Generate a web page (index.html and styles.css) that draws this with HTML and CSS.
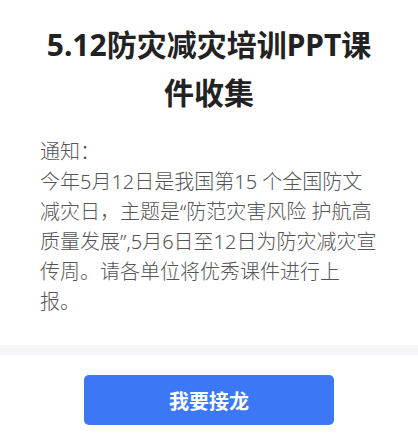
FILE: index.html
```html
<!DOCTYPE html>
<html lang="zh">
<head>
<meta charset="utf-8">
<link rel="stylesheet" href="styles.css">
</head>
<body>
<main class="page">
  <section class="content">
    <h1 class="title">5.12防灾减灾培训PPT课件收集</h1>
    <div class="notice">
      <p>通知：</p>
      <p>今年5月12日是我国第15 个全国防文减灾日，主题是“防范灾害风险 护航高质量发展”,5月6日至12日为防灾减灾宣传周。请各单位将优秀课件进行上报。</p>
    </div>
  </section>
  <div class="divider"></div>
  <footer class="actions">
    <button class="btn">我要接龙</button>
  </footer>
</main>
</body>
</html>
```
FILE: styles.css
```css
html, body {
  margin: 0;
  padding: 0;
  background: #fff;
}
body {
  font-family: "Noto Sans", "Noto Sans CJK SC", sans-serif;
}
.page {
  display: flex;
  flex-direction: column;
}
.content {
  padding: 21px 40px 28px;
}
.title {
  margin: 0;
  font-size: 30px;
  line-height: 48px;
  font-weight: 700;
  color: #222;
  text-align: center;
}
.notice {
  margin-top: 20px;
  font-size: 20px;
  line-height: 30px;
  color: #555;
  font-weight: 300;
}
.notice p {
  margin: 0;
}
.divider {
  height: 10px;
  background: #f5f6fa;
}
.actions {
  display: flex;
  justify-content: center;
  padding: 20px 0 21px;
}
.btn {
  width: 250px;
  height: 50px;
  border: none;
  border-radius: 5px;
  background: #3c78f6;
  color: #fff;
  font-family: "Noto Sans CJK SC", sans-serif;
  font-size: 20px;
  font-weight: 700;
}
```
